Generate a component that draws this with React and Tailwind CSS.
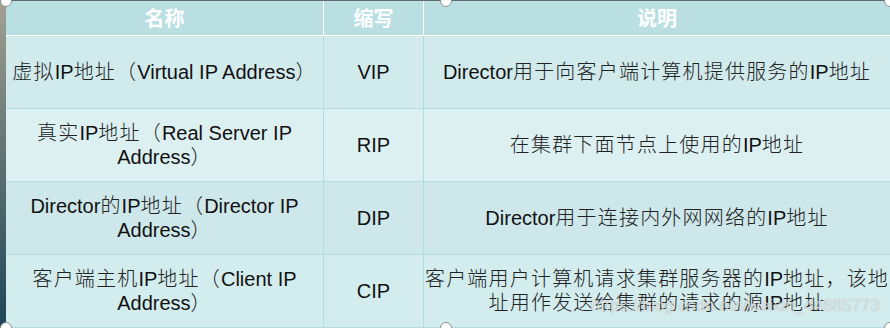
import React from "react";

const rows = [
  {
    name: ["虚拟IP地址（Virtual IP Address）"],
    abbr: "VIP",
    desc: ["Director用于向客户端计算机提供服务的IP地址"],
    bg: "bg-[#d1eaec]",
  },
  {
    name: ["真实IP地址（Real Server IP", "Address）"],
    abbr: "RIP",
    desc: ["在集群下面节点上使用的IP地址"],
    bg: "bg-[#dcf0f2]",
  },
  {
    name: ["Director的IP地址（Director IP", "Address）"],
    abbr: "DIP",
    desc: ["Director用于连接内外网网络的IP地址"],
    bg: "bg-[#cde7ea]",
  },
  {
    name: ["客户端主机IP地址（Client IP", "Address）"],
    abbr: "CIP",
    desc: ["客户端用户计算机请求集群服务器的IP地址，该地", "址用作发送给集群的请求的源IP地址"],
    bg: "bg-[#d3ecee]",
  },
];

// 选中框的小圆点
function Handle({ className }) {
  return (
    <div
      className={`absolute w-[12px] h-[12px] rounded-full bg-white border border-[#8a9090] ${className}`}
    />
  );
}

// 中文部分字距稍宽、字形偏细，和原图的宋体接近一点
function Mixed({ text }) {
  const parts = text.split(/([\u3000-\u9fff\uff00-\uffef]+)/);
  return parts.map((p, i) =>
    /[\u3000-\u9fff\uff00-\uffef]/.test(p) ? (
      <span key={i} className="tracking-[1.2px] font-light text-[#222]">
        {p}
      </span>
    ) : (
      <span key={i}>{p}</span>
    )
  );
}

function Lines({ lines }) {
  return lines.map((l, i) => (
    <span key={i} className="block whitespace-nowrap">
      <Mixed text={l} />
    </span>
  ));
}

export default function App() {
  return (
    <div className="relative w-[890px] h-[328px] overflow-hidden flex bg-white font-['Liberation_Sans','Noto_Sans_CJK_SC',sans-serif] text-[20px] leading-6 text-[#111]">
      {/* 左侧深色边 */}
      <div className="w-[6px] shrink-0 bg-gradient-to-b from-[#a3a292] via-[#5d7070] to-[#1b4658]" />

      <div className="flex-1 flex flex-col border-t border-[#606a6a]">
        {/* 表头 */}
        <div className="grid grid-cols-[318px_100px_1fr] h-[38px] bg-[#b9dfe3] border-b border-white text-white font-bold font-['Noto_Sans_CJK_SC',serif]">
          <div className="flex items-center justify-center border-r border-white">名称</div>
          <div className="flex items-center justify-center border-r border-white">缩写</div>
          <div className="flex items-center justify-center">说明</div>
        </div>

        {rows.map((r) => (
          <div
            key={r.abbr}
            className={`grid grid-cols-[318px_100px_1fr] h-[73px] shrink-0 border-b border-[#b3dce0] ${r.bg}`}
          >
            <div className="flex flex-col items-center justify-center text-center border-r border-[#b3dce0]">
              <Lines lines={r.name} />
            </div>
            <div className="flex items-center justify-center border-r border-[#b3dce0]">
              {r.abbr}
            </div>
            <div className="flex flex-col items-center justify-center text-center">
              <Lines lines={r.desc} />
            </div>
          </div>
        ))}
      </div>

      {/* 水印 */}
      <div className="absolute right-[10px] bottom-[12px] text-[17px] leading-5 text-white/70 [text-shadow:0_0_1px_rgba(0,0,0,0.35)] font-['Liberation_Sans',sans-serif]">
        https://blog.csdn.net/weixin_44685773
      </div>

      <Handle className="left-0 top-[-5px]" />
      <Handle className="left-[440px] top-[-5px]" />
      <Handle className="right-[-6px] top-[-5px]" />
      <Handle className="left-0 bottom-[-6px]" />
      <Handle className="left-[440px] bottom-[-6px]" />
      <Handle className="right-[-6px] bottom-[-6px]" />
    </div>
  );
}
